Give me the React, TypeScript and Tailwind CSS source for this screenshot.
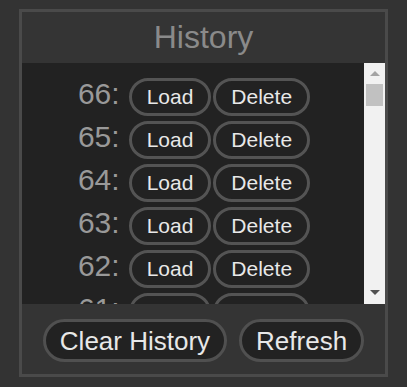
import React from 'react';

const entries = [66, 65, 64, 63, 62, 61];

const RowButton: React.FC<{ label: string; className?: string }> = ({ label, className }) => (
  <button
    className={`h-[38px] px-[15px] rounded-full border-[3px] border-[#545454] bg-[#222222] text-[21px] leading-[24px] text-[#e8e8e8] ${className ?? ''}`}
  >
    {label}
  </button>
);

const FooterButton: React.FC<{ label: string }> = ({ label }) => (
  <button className="h-[43px] px-[14px] rounded-full border-[3px] border-[#505050] bg-[#222222] text-[26px] leading-[30px] text-[#e8e8e8]">
    {label}
  </button>
);

const Scrollbar: React.FC = () => (
  <div className="w-[21px] flex-shrink-0 bg-[#f1f1f1] flex flex-col">
    {/* up arrow */}
    <div className="h-[21px] flex items-center justify-center">
      <svg width="10" height="5" viewBox="0 0 10 5">
        <polygon points="5,0 10,5 0,5" fill="#a3a3a3" />
      </svg>
    </div>
    {/* thumb */}
    <div className="h-[22px] mx-[2px] bg-[#c1c1c1]" />
    <div className="flex-1" />
    {/* down arrow */}
    <div className="h-[21px] flex items-center justify-center pb-[2px]">
      <svg width="10" height="5" viewBox="0 0 10 5">
        <polygon points="0,0 10,0 5,5" fill="#505050" />
      </svg>
    </div>
  </div>
);

export default function App() {
  return (
    <div
      className="w-[407px] h-[387px] bg-[#333333] pt-[9px] pl-[19px]"
      style={{ fontFamily: '"Liberation Sans", Arial, sans-serif' }}
    >
      <div className="w-[369px] h-[368px] border-[3px] border-[#4a4a4a] bg-[#343434] flex flex-col">
        {/* Title */}
        <div className="h-[51px] flex items-center justify-center text-[32px] leading-[37px] text-[#8a8a8a]">
          History
        </div>

        {/* History list */}
        <div className="h-[241px] flex">
          <div className="flex-1 bg-[#222222] overflow-hidden pt-[15px] flex flex-col gap-[5px]">
            {entries.map((n) => (
              <div key={n} className="h-[38px] flex-shrink-0 flex items-baseline justify-center pl-[2px]">
                <span className="text-[30px] leading-[28px] text-[#999999] mr-[9px]">{n}:</span>
                <RowButton label="Load" />
                <RowButton label="Delete" className="ml-[2px]" />
              </div>
            ))}
          </div>
          <Scrollbar />
        </div>

        {/* Footer actions */}
        <div className="flex-1 flex justify-center items-start gap-[12px] pt-[15px]">
          <FooterButton label="Clear History" />
          <FooterButton label="Refresh" />
        </div>
      </div>
    </div>
  );
}
